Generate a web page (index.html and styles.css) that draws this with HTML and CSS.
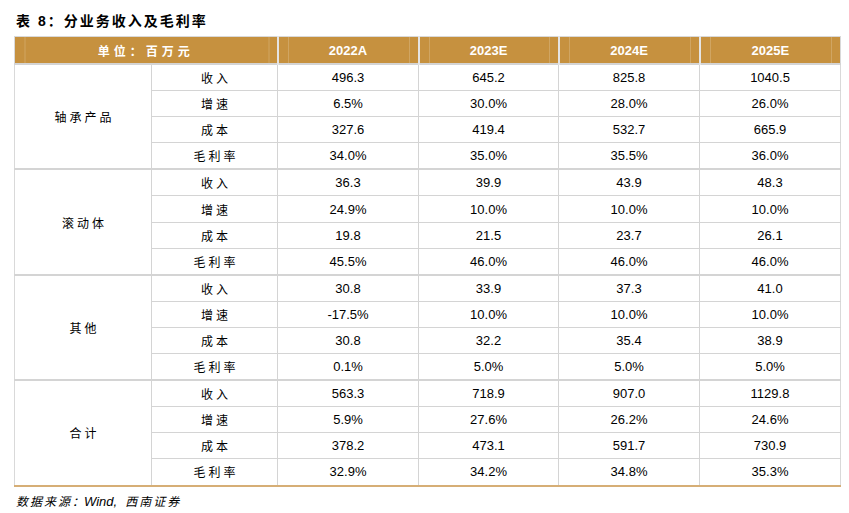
FILE: index.html
```html
<!DOCTYPE html>
<html lang="zh">
<head>
<meta charset="utf-8">
<link rel="stylesheet" href="styles.css">
</head>
<body>
<div class="page">
  <div class="title">表 8：分业务收入及毛利率</div>
  <table class="data">
    <colgroup>
      <col class="c1"><col class="c2"><col class="c3"><col class="c4"><col class="c5"><col class="c6">
    </colgroup>
    <thead>
      <tr>
        <th colspan="2" class="unit">单位：百万元</th>
        <th>2022A</th><th>2023E</th><th>2024E</th><th>2025E</th>
      </tr>
    </thead>
    <tbody>
      <tr class="gstart"><td rowspan="4" class="grp">轴承产品</td><td class="lbl">收入</td><td>496.3</td><td>645.2</td><td>825.8</td><td>1040.5</td></tr>
      <tr><td class="lbl">增速</td><td>6.5%</td><td>30.0%</td><td>28.0%</td><td>26.0%</td></tr>
      <tr><td class="lbl">成本</td><td>327.6</td><td>419.4</td><td>532.7</td><td>665.9</td></tr>
      <tr><td class="lbl">毛利率</td><td>34.0%</td><td>35.0%</td><td>35.5%</td><td>36.0%</td></tr>
      <tr class="gstart"><td rowspan="4" class="grp">滚动体</td><td class="lbl">收入</td><td>36.3</td><td>39.9</td><td>43.9</td><td>48.3</td></tr>
      <tr><td class="lbl">增速</td><td>24.9%</td><td>10.0%</td><td>10.0%</td><td>10.0%</td></tr>
      <tr><td class="lbl">成本</td><td>19.8</td><td>21.5</td><td>23.7</td><td>26.1</td></tr>
      <tr><td class="lbl">毛利率</td><td>45.5%</td><td>46.0%</td><td>46.0%</td><td>46.0%</td></tr>
      <tr class="gstart"><td rowspan="4" class="grp">其他</td><td class="lbl">收入</td><td>30.8</td><td>33.9</td><td>37.3</td><td>41.0</td></tr>
      <tr><td class="lbl">增速</td><td>-17.5%</td><td>10.0%</td><td>10.0%</td><td>10.0%</td></tr>
      <tr><td class="lbl">成本</td><td>30.8</td><td>32.2</td><td>35.4</td><td>38.9</td></tr>
      <tr><td class="lbl">毛利率</td><td>0.1%</td><td>5.0%</td><td>5.0%</td><td>5.0%</td></tr>
      <tr class="gstart"><td rowspan="4" class="grp">合计</td><td class="lbl">收入</td><td>563.3</td><td>718.9</td><td>907.0</td><td>1129.8</td></tr>
      <tr><td class="lbl">增速</td><td>5.9%</td><td>27.6%</td><td>26.2%</td><td>24.6%</td></tr>
      <tr><td class="lbl">成本</td><td>378.2</td><td>473.1</td><td>591.7</td><td>730.9</td></tr>
      <tr class="last"><td class="lbl">毛利率</td><td>32.9%</td><td>34.2%</td><td>34.8%</td><td>35.3%</td></tr>
    </tbody>
  </table>
  <div class="source">数据来源<span class="colon">：</span><span class="lat">Wind,</span>西南证券</div>
</div>
</body>
</html>
```

FILE: styles.css
```css
html, body {
  margin: 0;
  padding: 0;
  background: #ffffff;
}
.page {
  padding: 11px 10px 0 14px;
  font-family: "Liberation Sans", Arial, "Noto Sans CJK SC", sans-serif;
  color: #000;
}
.title {
  font-family: "Liberation Sans", "Noto Sans CJK SC", sans-serif;
  font-weight: bold;
  font-size: 14px;
  line-height: 20px;
  padding-left: 2px;
  letter-spacing: 2px;
  height: 25px;
}
.data {
  border-collapse: collapse;
  table-layout: fixed;
  width: 826px;
  border-top: 1px solid #d9d9d9;
  border-left: 1px solid #d9d9d9;
  border-right: 1px solid #d9d9d9;
  border-bottom: 2px solid #d6ae76;
}
.c1 { width: 137px; }
.c2 { width: 126px; }
.c3 { width: 141px; }
.c4 { width: 140px; }
.c5 { width: 141px; }
.c6 { width: 141px; }
.data th {
  height: 26px;
  padding: 0;
  background-color: #c6913f;
  background-image:
    linear-gradient(to right, transparent 9px, rgba(255,255,255,0.18) 9px, rgba(255,255,255,0.18) 10px, transparent 10px),
    linear-gradient(to left, transparent 8px, rgba(255,255,255,0.18) 8px, rgba(255,255,255,0.18) 9px, transparent 9px);
  color: #ffffff;
  font-weight: bold;
  font-size: 13px;
  text-align: center;
  border-left: 2px solid #e4e4e4;
  border-bottom: 1px solid #d9d9d9;
}
.data th:first-child { border-left: none; }
.data th.unit {
  font-family: "Noto Sans CJK SC", sans-serif;
  font-size: 12px;
  letter-spacing: 4px;
  font-weight: bold;
}
.data td {
  height: 25.1px;
  padding: 0;
  text-align: center;
  font-size: 13px;
  border: 1px solid #d4d4d4;
}
.data td.lbl, .data td.grp, .source {
  font-family: "Noto Sans CJK SC", sans-serif;
}
.data td.lbl {
  font-size: 12px;
  letter-spacing: 3px;
  padding-left: 3px;
}
.data td.grp {
  font-size: 12px;
  letter-spacing: 3px;
  padding-left: 3px;
  border-left: none;
}
.data td:last-child { border-right: none; }
.data tr.gstart td { border-top: 2px solid #d4d4d4; }
.data tr.last td { border-bottom: none; }
.source {
  font-size: 12px;
  font-style: italic;
  line-height: 16px;
  padding-top: 6px;
  padding-left: 2px;
  letter-spacing: 2px;
}
.source .colon {
  letter-spacing: 0;
}
.source .lat {
  font-family: "Liberation Sans", sans-serif;
  font-size: 13px;
  letter-spacing: 0;
  margin-right: 8px;
}
```
